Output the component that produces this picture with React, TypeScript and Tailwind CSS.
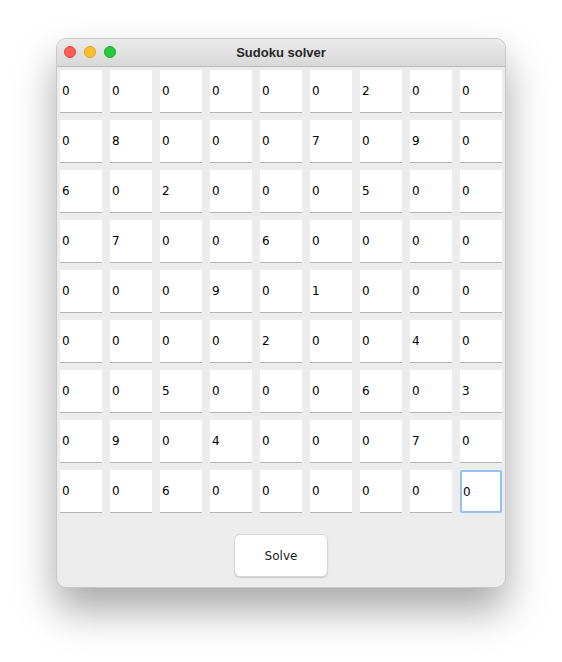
import React from "react";

const grid: number[][] = [
  [0, 0, 0, 0, 0, 0, 2, 0, 0],
  [0, 8, 0, 0, 0, 7, 0, 9, 0],
  [6, 0, 2, 0, 0, 0, 5, 0, 0],
  [0, 7, 0, 0, 6, 0, 0, 0, 0],
  [0, 0, 0, 9, 0, 1, 0, 0, 0],
  [0, 0, 0, 0, 2, 0, 0, 4, 0],
  [0, 0, 5, 0, 0, 0, 6, 0, 3],
  [0, 9, 0, 4, 0, 0, 0, 7, 0],
  [0, 0, 6, 0, 0, 0, 0, 0, 0],
];

const App = () => {
  return (
    <div className="w-[562px] h-[662px] bg-white pt-[38px] pl-[56px]" style={{ fontFamily: '"DejaVu Sans", "Liberation Sans", sans-serif' }}>
      <div className="w-[450px] h-[550px] rounded-[10px] bg-[#ececec] border border-[#c8c8c8] shadow-[0_22px_40px_rgba(0,0,0,0.35)] overflow-hidden flex flex-col">
        {/* Title bar */}
        <div className="relative h-[28px] flex items-center justify-center bg-gradient-to-b from-[#ebebeb] to-[#d8d8d8] border-b border-[#b9b9b9]">
          <div className="absolute left-[7px] top-[7px] flex gap-[8px]">
            <span className="w-[12px] h-[12px] rounded-full bg-[#fe5f57] border border-[#e1453f]" />
            <span className="w-[12px] h-[12px] rounded-full bg-[#febc2e] border border-[#dea123]" />
            <span className="w-[12px] h-[12px] rounded-full bg-[#28c840] border border-[#1aab2b]" />
          </div>
          <span className="text-[13px] font-bold text-[#262626] font-['Liberation_Sans',Arial,sans-serif]">Sudoku solver</span>
        </div>

        {/* Board */}
        <div className="pt-[3px] pl-[3px] grid grid-cols-[repeat(9,42px)] auto-rows-[43px] gap-x-[8px] gap-y-[7px]">
          {grid.map((row, r) =>
            row.map((v, c) => {
              const focused = r === 8 && c === 8;
              return (
                <div
                  key={`${r}-${c}`}
                  className={
                    focused
                      ? "bg-white border-[2px] border-[#95c0f4] rounded-[2px] flex items-center pl-[1px] text-[12px] text-black"
                      : "bg-white border-b border-[#b4b4b4] flex items-center pl-[2px] text-[12px] text-black"
                  }
                >
                  {v}
                </div>
              );
            })
          )}
        </div>

        {/* Solve */}
        <div className="flex justify-center mt-[21px]">
          <button className="w-[94px] h-[43px] bg-white rounded-[6px] border border-[#d6d6d6] shadow-[0_1px_1px_rgba(0,0,0,0.15)] text-[12px] text-[#1a1a1a]">
            Solve
          </button>
        </div>
      </div>
    </div>
  );
};

export default App;
